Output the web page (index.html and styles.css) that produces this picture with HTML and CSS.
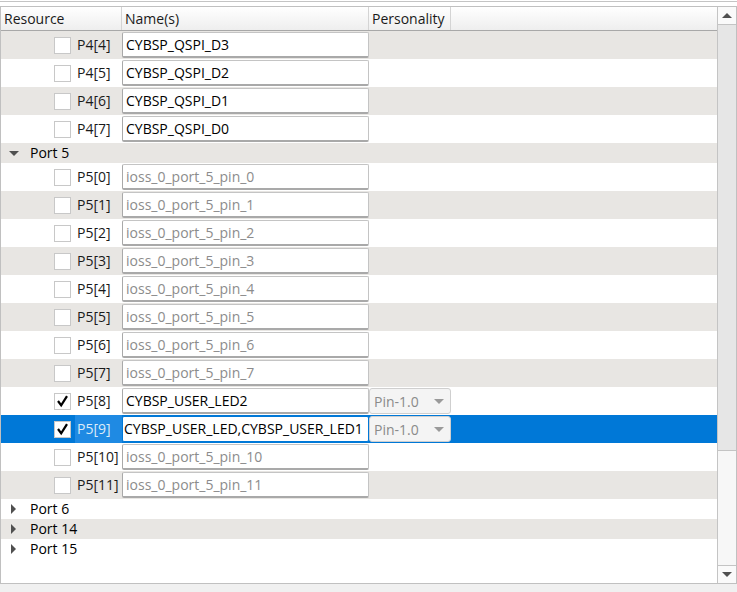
FILE: index.html
```html
<!DOCTYPE html>
<html>
<head>
<meta charset="utf-8">
<link rel="stylesheet" href="styles.css">
</head>
<body>
<div class="topbar"></div>
<div class="frame">
  <div class="table">
    <div class="header">
      <div class="hcell c-res">Resource</div>
      <div class="hcell c-name">Name(s)</div>
      <div class="hcell c-pers">Personality</div>
      <div class="hcell c-rest"></div>
    </div>
    <div class="rows">
      <div class="row pin alt"><div class="res"><span class="cb"></span><span class="lbl">P4[4]</span></div><div class="name"><div class="field">CYBSP_QSPI_D3</div></div><div class="pers"></div></div>
      <div class="row pin"><div class="res"><span class="cb"></span><span class="lbl">P4[5]</span></div><div class="name"><div class="field">CYBSP_QSPI_D2</div></div><div class="pers"></div></div>
      <div class="row pin alt"><div class="res"><span class="cb"></span><span class="lbl">P4[6]</span></div><div class="name"><div class="field">CYBSP_QSPI_D1</div></div><div class="pers"></div></div>
      <div class="row pin"><div class="res"><span class="cb"></span><span class="lbl">P4[7]</span></div><div class="name"><div class="field">CYBSP_QSPI_D0</div></div><div class="pers"></div></div>
      <div class="row port alt"><span class="tri open"></span><span class="plbl">Port 5</span></div>
      <div class="row pin"><div class="res"><span class="cb"></span><span class="lbl">P5[0]</span></div><div class="name"><div class="field dim">ioss_0_port_5_pin_0</div></div><div class="pers"></div></div>
      <div class="row pin alt"><div class="res"><span class="cb"></span><span class="lbl">P5[1]</span></div><div class="name"><div class="field dim">ioss_0_port_5_pin_1</div></div><div class="pers"></div></div>
      <div class="row pin"><div class="res"><span class="cb"></span><span class="lbl">P5[2]</span></div><div class="name"><div class="field dim">ioss_0_port_5_pin_2</div></div><div class="pers"></div></div>
      <div class="row pin alt"><div class="res"><span class="cb"></span><span class="lbl">P5[3]</span></div><div class="name"><div class="field dim">ioss_0_port_5_pin_3</div></div><div class="pers"></div></div>
      <div class="row pin"><div class="res"><span class="cb"></span><span class="lbl">P5[4]</span></div><div class="name"><div class="field dim">ioss_0_port_5_pin_4</div></div><div class="pers"></div></div>
      <div class="row pin alt"><div class="res"><span class="cb"></span><span class="lbl">P5[5]</span></div><div class="name"><div class="field dim">ioss_0_port_5_pin_5</div></div><div class="pers"></div></div>
      <div class="row pin"><div class="res"><span class="cb"></span><span class="lbl">P5[6]</span></div><div class="name"><div class="field dim">ioss_0_port_5_pin_6</div></div><div class="pers"></div></div>
      <div class="row pin alt"><div class="res"><span class="cb"></span><span class="lbl">P5[7]</span></div><div class="name"><div class="field dim">ioss_0_port_5_pin_7</div></div><div class="pers"></div></div>
      <div class="row pin"><div class="res"><span class="cb checked"><svg viewBox="0 0 16 16" width="16" height="16"><path d="M3.2 8 L6.6 12.6 L12.8 2.8" fill="none" stroke="#000" stroke-width="2.4"/></svg></span><span class="lbl">P5[8]</span></div><div class="name"><div class="field">CYBSP_USER_LED2</div></div><div class="pers"><div class="combo"><span>Pin-1.0</span><span class="arr"></span></div></div></div>
      <div class="row pin sel"><div class="res"><span class="cb checked"><svg viewBox="0 0 16 16" width="16" height="16"><path d="M3.2 8 L6.6 12.6 L12.8 2.8" fill="none" stroke="#000" stroke-width="2.4"/></svg></span><span class="lbl">P5[9]</span></div><div class="name"><div class="field focus">CYBSP_USER_LED,CYBSP_USER_LED1</div></div><div class="pers"><div class="combo"><span>Pin-1.0</span><span class="arr"></span></div></div></div>
      <div class="row pin"><div class="res"><span class="cb"></span><span class="lbl">P5[10]</span></div><div class="name"><div class="field dim">ioss_0_port_5_pin_10</div></div><div class="pers"></div></div>
      <div class="row pin alt"><div class="res"><span class="cb"></span><span class="lbl">P5[11]</span></div><div class="name"><div class="field dim">ioss_0_port_5_pin_11</div></div><div class="pers"></div></div>
      <div class="row port"><span class="tri"></span><span class="plbl">Port 6</span></div>
      <div class="row port alt"><span class="tri"></span><span class="plbl">Port 14</span></div>
      <div class="row port"><span class="tri"></span><span class="plbl">Port 15</span></div>
    </div>
  </div>
  <div class="scrollbar">
    <div class="sbtn"><span class="up"></span></div>
    <div class="thumb"></div>
    <div class="track"></div>
    <div class="sbtn"><span class="down"></span></div>
  </div>
</div>
<div class="bottom"></div>
</body>
</html>
```
FILE: styles.css
```css
* { box-sizing: border-box; }
html, body { margin: 0; padding: 0; }
body {
  width: 737px;
  height: 592px;
  background: #f0f0f0;
  font-family: "Open Sans", "Noto Sans", sans-serif;
  font-size: 14px;
  color: #000;
  overflow: hidden;
}
.topbar {
  height: 6px;
  background: #fff;
  border-top: 1px solid #fff;
}
.topbar::before {
  content: "";
  display: block;
  height: 1px;
  background: #c4c4c4;
}
.frame {
  display: flex;
  height: 578px;
  border: 1px solid #c0c0c0;
  background: #fff;
}
.table {
  flex: 1;
  display: flex;
  flex-direction: column;
  min-width: 0;
}
.header {
  display: grid;
  grid-template-columns: 121px 247px 82px 1fr;
  height: 24px;
  background: linear-gradient(#ffffff, #eeeeee);
  border-bottom: 1px solid #a8a8a8;
}
.hcell {
  border-right: 1px solid #d4d4d4;
  padding-left: 3px;
  line-height: 23px;
  color: #1a1a1a;
}
.c-name { padding-left: 3px; }
.c-rest { border-right: none; }
.rows { display: flex; flex-direction: column; }
.row {
  display: grid;
  grid-template-columns: 121px 247px 82px 1fr;
  height: 28px;
  background: #fff;
}
.row.alt { background: #e8e6e3; }
.row.sel { background: #0078d7; }
.res {
  display: flex;
  align-items: center;
  padding-left: 53px;
}
.cb {
  width: 17px;
  height: 17px;
  background: #fff;
  border: 1px solid #c8c8c8;
  flex: none;
  display: flex;
  align-items: center;
  justify-content: center;
}
.cb svg { display: block; }
.lbl {
  margin-left: 6px;
  color: #1a1a1a;
  height: 28px;
  line-height: 28px;
  padding: 0 2px 0 0;
}
.sel .lbl {
  background: #1f8ae3;
  color: #dcebf8;
  flex: 1;
  margin-left: 4px;
  padding-left: 2px;
}
.name { padding: 1px 0 1px 0; }
.field {
  height: 26px;
  background: #fff;
  border: 1px solid #c4c4c4;
  border-left-color: #a9a9a9;
  border-bottom: 2px solid #a9a9a9;
  border-radius: 2px;
  padding-left: 3px;
  line-height: 23px;
  white-space: nowrap;
  overflow: hidden;
  color: #000;
}
.field.dim { color: #8c8c8c; }
.field.focus { border-color: #0078d7; border-bottom-width: 1px; padding-left: 1px; line-height: 24px; }
.pers { padding: 1px 0; }
.combo {
  height: 26px;
  background: #f4f4f4;
  border: 1px solid #cfcfcf;
  border-radius: 3px;
  display: flex;
  align-items: center;
  padding-left: 4px;
  color: #8a8a8a;
}
.combo .arr {
  margin-left: 15px;
  width: 0;
  height: 0;
  border-left: 5px solid transparent;
  border-right: 5px solid transparent;
  border-top: 5px solid #9a9a9a;
}
.row.port {
  display: flex;
  align-items: center;
  height: 20px;
}
.tri {
  width: 0;
  height: 0;
  margin-left: 10px;
  border-top: 5px solid transparent;
  border-bottom: 5px solid transparent;
  border-left: 5px solid #505050;
}
.tri.open {
  margin-left: 8px;
  border-left: 5px solid transparent;
  border-right: 5px solid transparent;
  border-top: 5px solid #505050;
  border-bottom: none;
}
.plbl { margin-left: 14px; line-height: 20px; }
.tri.open + .plbl { margin-left: 11px; }
.scrollbar {
  width: 19px;
  flex: none;
  display: flex;
  flex-direction: column;
  border-left: 1px solid #c4c4c4;
  background: #f7f7f7;
}
.sbtn {
  height: 17px;
  flex: none;
  display: flex;
  align-items: center;
  justify-content: center;
  background: #fafafa;
}
.up {
  width: 0; height: 0;
  border-left: 5px solid transparent;
  border-right: 5px solid transparent;
  border-bottom: 5px solid #505050;
}
.down {
  width: 0; height: 0;
  border-left: 5px solid transparent;
  border-right: 5px solid transparent;
  border-top: 5px solid #505050;
}
.thumb {
  height: 427px;
  flex: none;
  background: #e6e6e6;
  border: 1px solid #c4c4c4;
  border-left: none;
  border-right: none;
}
.track {
  flex: 1;
  border-bottom: 1px solid #c4c4c4;
}
.bottom { height: 8px; }
```
